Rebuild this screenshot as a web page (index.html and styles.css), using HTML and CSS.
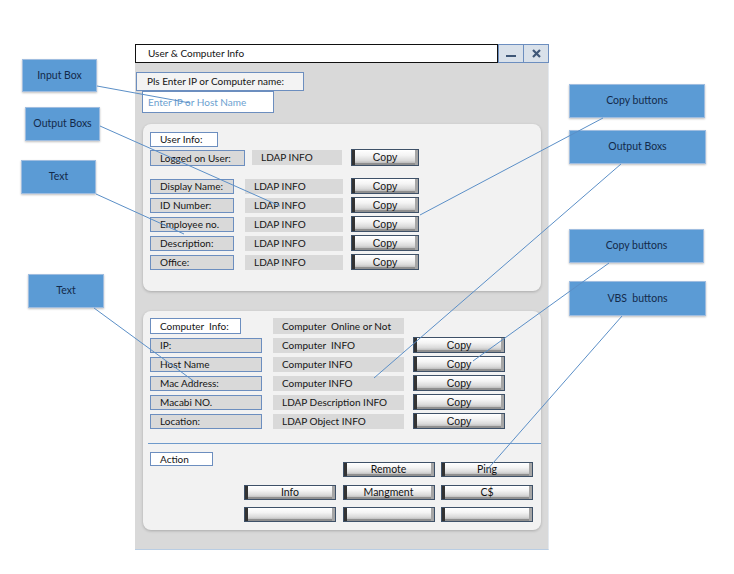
FILE: index.html
```html
<!DOCTYPE html>
<html>
<head>
<meta charset="utf-8">
<title>User &amp; Computer Info</title>
<link rel="stylesheet" href="styles.css">
</head>
<body>
<div class="canvas">
  <div class="window">
    <div class="titlebar">
      <div class="title">User &amp; Computer Info</div>
      <div class="tbtn min"><span class="dash"></span></div>
      <div class="tbtn close">
        <svg width="9" height="9" viewBox="0 0 9 9"><path d="M1 1 L8 8 M8 1 L1 8" stroke="#3f5777" stroke-width="2.2" stroke-linecap="butt"/></svg>
      </div>
    </div>
    <div class="wbody">
      <div class="prompt">Pls Enter IP or Computer name:</div>
      <div class="input">Enter IP or Host Name</div>

      <div class="panel panel-user">
        <div class="tag tag-user">User Info:</div>
        <div class="row row-logged">
          <div class="label l-logged">Logged on User:</div>
          <div class="out o-logged">LDAP INFO</div>
          <div class="copy c-user c-logged">Copy</div>
        </div>
        <div class="rows rows-user">
          <div class="row"><div class="label l-user">Display Name:</div><div class="out o-user">LDAP INFO</div><div class="copy c-user">Copy</div></div>
          <div class="row"><div class="label l-user">ID Number:</div><div class="out o-user">LDAP INFO</div><div class="copy c-user">Copy</div></div>
          <div class="row"><div class="label l-user">Employee no.</div><div class="out o-user">LDAP INFO</div><div class="copy c-user">Copy</div></div>
          <div class="row"><div class="label l-user">Description:</div><div class="out o-user">LDAP INFO</div><div class="copy c-user">Copy</div></div>
          <div class="row"><div class="label l-user">Office:</div><div class="out o-user">LDAP INFO</div><div class="copy c-user">Copy</div></div>
        </div>
      </div>

      <div class="panel panel-comp">
        <div class="row row-head">
          <div class="tag tag-comp">Computer&nbsp; Info:</div>
          <div class="out o-status">Computer&nbsp; Online or Not</div>
        </div>
        <div class="row"><div class="label l-comp">IP:</div><div class="out o-comp">Computer&nbsp; INFO</div><div class="copy c-comp">Copy</div></div>
        <div class="row"><div class="label l-comp">Host Name</div><div class="out o-comp">Computer INFO</div><div class="copy c-comp">Copy</div></div>
        <div class="row"><div class="label l-comp">Mac Address:</div><div class="out o-comp">Computer INFO</div><div class="copy c-comp">Copy</div></div>
        <div class="row"><div class="label l-comp">Macabi NO.</div><div class="out o-comp">LDAP Description INFO</div><div class="copy c-comp">Copy</div></div>
        <div class="row"><div class="label l-comp">Location:</div><div class="out o-comp">LDAP Object INFO</div><div class="copy c-comp">Copy</div></div>
        <div class="divider"></div>
        <div class="tag tag-action">Action</div>
        <div class="actions">
          <div class="vbs slot2">Remote</div>
          <div class="vbs">Ping</div>
          <div class="vbs">Info</div>
          <div class="vbs">Mangment</div>
          <div class="vbs">C$</div>
          <div class="vbs"></div>
          <div class="vbs"></div>
          <div class="vbs"></div>
        </div>
      </div>
    </div>
  </div>

  <div class="note n-input">Input Box</div>
  <div class="note n-out1">Output Boxs</div>
  <div class="note n-text1">Text</div>
  <div class="note n-text2">Text</div>
  <div class="note n-copy1">Copy buttons</div>
  <div class="note n-out2">Output Boxs</div>
  <div class="note n-copy2">Copy buttons</div>
  <div class="note n-vbs">VBS&nbsp; buttons</div>

  <svg class="links" width="734" height="574" viewBox="0 0 734 574">
    <line x1="97" y1="86" x2="190" y2="103"/>
    <line x1="100" y1="126" x2="280" y2="206"/>
    <line x1="96" y1="194" x2="184" y2="234"/>
    <line x1="94" y1="308" x2="195" y2="382"/>
    <line x1="603" y1="118" x2="420" y2="215"/>
    <line x1="621" y1="164" x2="374" y2="378"/>
    <line x1="609" y1="263" x2="473" y2="361"/>
    <line x1="622" y1="316" x2="486" y2="471"/>
  </svg>
</div>
</body>
</html>
```
FILE: styles.css
```css
* { box-sizing: border-box; }

html, body {
  margin: 0;
  padding: 0;
  background: #ffffff;
}

body {
  font-family: Lato, "Open Sans", sans-serif;
  font-size: 10px;
  color: #141414;
}

.canvas {
  position: relative;
  width: 734px;
  height: 574px;
  overflow: hidden;
}

/* ---------- window ---------- */
.window {
  position: absolute;
  left: 135px;
  top: 44px;
  width: 414px;
}

.titlebar {
  display: flex;
  height: 19px;
}

.title {
  flex: 1;
  background: #ffffff;
  border: 1px solid #111;
  padding-left: 12px;
  line-height: 17px;
}

.tbtn {
  background: #d9e1ea;
  border: 1px solid #6c8ebf;
  display: flex;
  align-items: center;
  justify-content: center;
}

.tbtn.min { width: 25px; border-right: none; }
.tbtn.close { width: 26px; }

.dash {
  display: block;
  width: 10px;
  height: 2px;
  margin-top: 5px;
  background: #3f5777;
}

.wbody {
  height: 487px;
  background: #d9d9d9;
  border-right: 1px solid #e4e9ef;
  border-bottom: 1px solid #b9cde3;
  padding-top: 9px;
}

.prompt {
  margin-left: 1px;
  width: 168px;
  height: 19px;
  border: 1px solid #6c8ebf;
  background: #f3f3f3;
  padding-left: 10px;
  line-height: 17px;
}

.input {
  margin-left: 7px;
  width: 132px;
  height: 22px;
  border: 1px solid #6c8ebf;
  background: #ffffff;
  padding-left: 5px;
  line-height: 20px;
  color: #6c9fd0;
}

/* ---------- panels ---------- */
.panel {
  margin-left: 8px;
  width: 398px;
  background: #f2f2f2;
  border-radius: 8px;
  box-shadow: 0 1px 3px rgba(0, 0, 0, 0.22);
  padding-left: 7px;
}

.panel-user {
  margin-top: 11px;
  height: 167px;
  padding-top: 8px;
}

.panel-comp {
  margin-top: 20px;
  height: 219px;
  padding-top: 7px;
}

.tag {
  height: 15px;
  border: 1px solid #6c8ebf;
  background: #ffffff;
  padding-left: 9px;
  line-height: 13px;
}

.tag-user { width: 68px; }
.tag-comp { width: 91px; height: 16px; line-height: 14px; }
.tag-action { width: 63px; height: 14px; line-height: 12px; margin-top: 8px; margin-bottom: -4px; }

.row {
  display: flex;
  align-items: center;
  height: 16px;
  margin-top: 3px;
}

.row-logged { height: 17px; margin-top: 2px; }
.row-head { margin-top: 0; }

.rows-user { margin-top: 12px; }

.label {
  height: 15px;
  border: 1px solid #6c8ebf;
  background: #d9d9d9;
  padding-left: 9px;
  line-height: 13px;
  white-space: nowrap;
}

.out {
  height: 15px;
  background: #d9d9d9;
  padding-left: 9px;
  line-height: 15px;
  white-space: nowrap;
}

.l-logged { width: 95px; height: 16px; line-height: 14px; }
.o-logged { width: 90px; margin-left: 7px; }
.l-user { width: 84px; }
.o-user { width: 98px; margin-left: 11px; }
.l-comp { width: 112px; }
.o-comp { width: 131px; margin-left: 11px; }
.o-status { width: 131px; margin-left: 32px; height: 16px; line-height: 16px; }

/* ---------- bevelled buttons ---------- */
.copy, .vbs {
  border: 1px solid #3e5168;
  background: linear-gradient(to bottom, #ffffff 0%, #f4f4f4 35%, #dadada 70%, #a4a4a4 100%);
  box-shadow:
    inset 3px 0 0 #333333,
    inset -3px 0 0 #a6a6a6,
    inset 0 -2px 0 #8f8f8f,
    inset 0 1px 0 #ffffff;
  text-align: center;
  color: #111;
}

.copy {
  font-family: "Liberation Sans", Arial, sans-serif;
  font-size: 10.5px;
  height: 16px;
  line-height: 14px;
}

.c-user { width: 68px; margin-left: 8px; }
.c-logged { height: 17px; margin-left: 9px; line-height: 15px; }
.c-comp { width: 92px; margin-left: 9px; }

.divider {
  margin-top: 14px;
  margin-left: -2px;
  height: 1px;
  background: #6e9acb;
}

.actions {
  margin-left: 94px;
  display: grid;
  grid-template-columns: repeat(3, 92px);
  grid-auto-rows: 15px;
  column-gap: 6.5px;
  row-gap: 7.5px;
}

.vbs {
  line-height: 13px;
  font-size: 10.5px;
}

.slot2 { grid-column: 2; }

/* ---------- annotation notes ---------- */
.note {
  position: absolute;
  background: #5b9bd5;
  border: 1px solid #9fbde0;
  box-shadow: 0 1px 2px rgba(0, 0, 0, 0.25);
  color: #132a4a;
  font-size: 10.5px;
  display: flex;
  align-items: center;
  justify-content: center;
  padding-bottom: 2px;
}

.n-input { left: 22px; top: 59px; width: 75px; height: 33px; }
.n-out1 { left: 25px; top: 107px; width: 75px; height: 34px; }
.n-text1 { left: 21px; top: 160px; width: 75px; height: 34px; }
.n-text2 { left: 28px; top: 274px; width: 76px; height: 34px; }
.n-copy1 { left: 569px; top: 84px; width: 136px; height: 34px; }
.n-out2 { left: 569px; top: 130px; width: 137px; height: 34px; }
.n-copy2 { left: 569px; top: 229px; width: 135px; height: 34px; }
.n-vbs { left: 569px; top: 281px; width: 137px; height: 35px; }

.links {
  position: absolute;
  left: 0;
  top: 0;
  pointer-events: none;
}

.links line {
  stroke: #5b8fc7;
  stroke-width: 1;
}
```
